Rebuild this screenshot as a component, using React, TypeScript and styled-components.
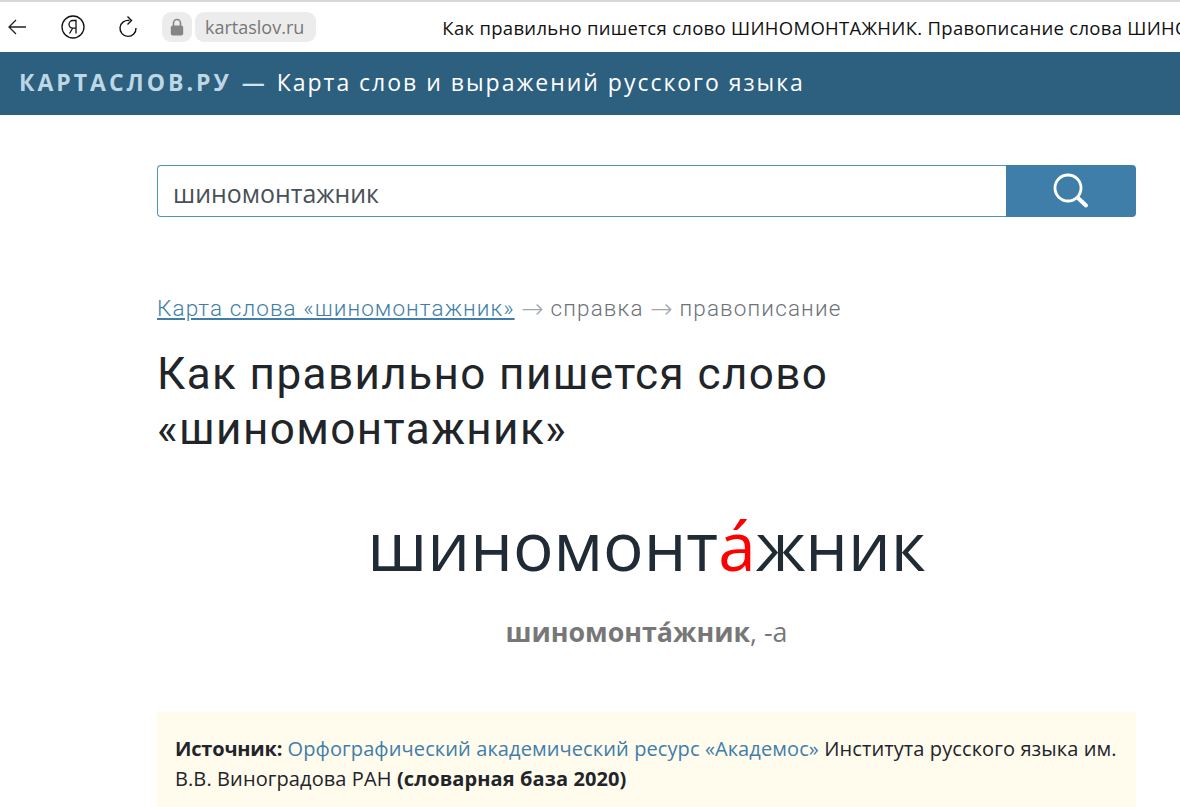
import styled, { createGlobalStyle } from "styled-components";

const GlobalStyle = createGlobalStyle`
  html, body {
    margin: 0;
    padding: 0;
    height: 807px;
    overflow: hidden;
    background: #fff;
    font-family: "Open Sans", "Liberation Sans", sans-serif;
    color: #212529;
  }
`;

const BrowserBar = styled.div`
  height: 50px;
  border-top: 2px solid #d5d7db;
  display: flex;
  align-items: center;
  padding-left: 6px;
  overflow: hidden;
  white-space: nowrap;
`;

const ToolIcon = styled.svg<{ $gap: number }>`
  flex: none;
  margin-right: ${(p) => p.$gap}px;
`;

const LockChip = styled.div`
  width: 30px;
  height: 30px;
  border-radius: 9px;
  background: #ececec;
  display: flex;
  align-items: center;
  justify-content: center;
  margin-right: 3px;
  flex: none;
`;

const UrlChip = styled.div`
  height: 30px;
  padding: 0 12px 0 10px;
  border-radius: 9px;
  background: #ececec;
  color: #777;
  font-size: 18px;
  line-height: 30px;
  flex: none;
`;

const TabTitle = styled.div`
  margin-left: 126px;
  font-size: 18.5px;
  letter-spacing: 0.3px;
  color: #111;
  flex: none;
`;

const SiteHeader = styled.header`
  height: 63px;
  background: #2d5f7f;
  display: flex;
  align-items: center;
  padding-left: 19px;
  padding-bottom: 4px;
  box-sizing: border-box;
  font-size: 23px;
  letter-spacing: 1.98px;
  color: #fff;
  white-space: nowrap;
`;

const Brand = styled.span`
  font-weight: 700;
  letter-spacing: 3px;
  color: #bdd7e5;
  margin-right: 10px;
`;

const Dash = styled.span`
  font-weight: 600;
  color: #cfe3ee;
  margin-right: 10px;
`;

const Main = styled.main`
  margin: 50px 44px 0 157px;
`;

const SearchForm = styled.form`
  display: flex;
  height: 52px;
  margin-bottom: 76px;
`;

const SearchInput = styled.div`
  flex: 1;
  border: 1px solid #4f93bb;
  border-right: 0;
  border-radius: 4px 0 0 4px;
  padding-left: 15px;
  font-size: 24.9px;
  line-height: 54px;
  color: #495057;
`;

const SearchButton = styled.button`
  width: 130px;
  border: 0;
  padding: 0;
  background: #407eaa;
  border-radius: 0 4px 4px 0;
  display: flex;
  align-items: center;
  justify-content: center;
`;

const Crumbs = styled.div`
  font-family: Roboto, "Liberation Sans", sans-serif;
  font-weight: 300;
  font-size: 22.5px;
  line-height: 30px;
  letter-spacing: 1.14px;
  color: #6c7278;
  margin-bottom: 24px;
`;

const CrumbLink = styled.a`
  color: #407eaa;
  text-decoration: underline;
  letter-spacing: 1.1px;
`;

const Arrow = styled.span`
  font-family: "DejaVu Sans", sans-serif;
  font-size: 27px;
  line-height: 0;
  vertical-align: -2px;
  color: #a3a8ac;
  letter-spacing: 0;
`;

const Title = styled.h1`
  margin: 0 0 48px;
  font-family: Roboto, "Liberation Sans", sans-serif;
  font-weight: 400;
  font-size: 44px;
  line-height: 55px;
  letter-spacing: 1.42px;
  color: #212529;
`;

const BigWord = styled.div`
  text-align: center;
  font-size: 67.5px;
  font-weight: 400;
  line-height: 80px;
  color: #212b35;
  margin-bottom: 30px;
`;

const Stress = styled.span`
  color: #ff0000;
`;

const WordForm = styled.div`
  text-align: center;
  font-size: 26.8px;
  line-height: 34px;
  color: #777;
  margin-bottom: 63px;
`;

const SourceBox = styled.div`
  background: #fffbed;
  padding: 22px 18px;
  font-size: 20px;
  line-height: 30px;
  letter-spacing: 0.1px;
  color: #212529;
  height: 120px;
  box-sizing: border-box;
`;

const SourceLabel = styled.b`
  letter-spacing: -0.2px;
`;

const SourceLink = styled.a`
  color: #407eaa;
`;

export default function App() {
  return (
    <>
      <GlobalStyle />
      <BrowserBar>
        <ToolIcon $gap={33} width="22" height="22" viewBox="0 0 22 22" fill="none" stroke="#222" strokeWidth="1.3">
          <path d="M20 11H3M10 4l-7 7 7 7" />
        </ToolIcon>
        <ToolIcon $gap={32} width="24" height="24" viewBox="0 0 24 24" fill="none" stroke="#111" strokeWidth="1.3">
          <circle cx="12" cy="12" r="11" />
          <path d="M15 18.5V5.5h-3.2a3.7 3.7 0 0 0 0 7.6H15M11.8 13l-3.3 5.5" />
        </ToolIcon>
        <ToolIcon $gap={23} width="22" height="24" viewBox="0 0 22 24" fill="none" stroke="#111" strokeWidth="1.4">
          <path d="M12.5 5.5A8 8 0 1 0 19 13" />
          <path d="M10.5 1.5l4 4-4 4" />
        </ToolIcon>
        <LockChip>
          <svg width="14" height="18" viewBox="0 0 14 18">
            <path d="M3.5 8V5a3.5 3.5 0 0 1 7 0v3" fill="none" stroke="#858585" strokeWidth="1.6" />
            <rect x="0.8" y="7.5" width="12.4" height="10" rx="2" fill="#858585" />
          </svg>
        </LockChip>
        <UrlChip>kartaslov.ru</UrlChip>
        <TabTitle>Как правильно пишется слово ШИНОМОНТАЖНИК. Правописание слова ШИНОМОНТАЖНИК</TabTitle>
      </BrowserBar>
      <SiteHeader>
        <Brand>КАРТАСЛОВ.РУ</Brand>
        <Dash>—</Dash>
        Карта слов и выражений русского языка
      </SiteHeader>
      <Main>
        <SearchForm>
          <SearchInput>шиномонтажник</SearchInput>
          <SearchButton type="button" aria-label="Найти">
            <svg width="38" height="38" viewBox="0 0 38 38" fill="none" stroke="#fff">
              <circle cx="16" cy="16" r="13" strokeWidth="2.8" />
              <path d="M26 26l8 7.5" strokeWidth="4" strokeLinecap="round" />
            </svg>
          </SearchButton>
        </SearchForm>
        <Crumbs>
          <CrumbLink>Карта слова «шиномонтажник»</CrumbLink> <Arrow>→</Arrow> справка <Arrow>→</Arrow> правописание
        </Crumbs>
        <Title>
          Как правильно пишется слово
          <br />
          «шиномонтажник»
        </Title>
        <BigWord>
          шиномонт<Stress>а́</Stress>жник
        </BigWord>
        <WordForm>
          <b>шиномонта́жник</b>, -а
        </WordForm>
        <SourceBox>
          <SourceLabel>Источник:</SourceLabel> <SourceLink>Орфографический академический ресурс «Академос»</SourceLink> Института русского языка им. В.В. Виноградова РАН <b>(словарная база 2020)</b>
        </SourceBox>
      </Main>
    </>
  );
}
